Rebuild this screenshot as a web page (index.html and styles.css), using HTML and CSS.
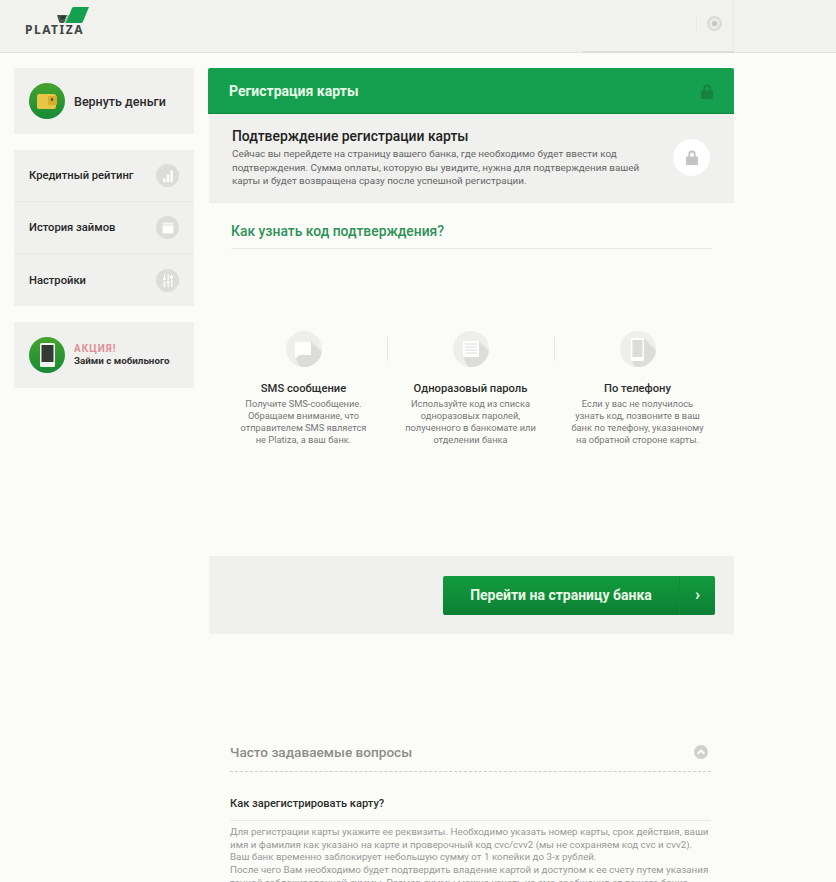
FILE: index.html
```html
<!DOCTYPE html>
<html lang="ru">
<head>
<meta charset="utf-8">
<title>Platiza</title>
<link rel="stylesheet" href="styles.css">
</head>
<body>
<header class="topbar">
  <div class="logo">
    <svg class="logo-mark" width="32" height="17" viewBox="0 0 32 17"><path d="M0 8h10l-2.500 7q-.5 1-1.500 1H4q-1.500 0-2-1.500z" fill="#44584a"/><path d="M3.500 9h5l-1 3h-3z" fill="#2b3a30"/><path d="M10.800 8h3L9.500 16h-2z" fill="#7cc596"/><path d="M15 1q.5-1 2-1h15l-6 14.500q-.6 1.500-2 1.500H9z" fill="#14a04e"/></svg>
    <span class="logo-text">PLATIZA</span>
  </div>
  <div class="top-user">
    <span class="top-sep"></span>
    <span class="top-gear"><i></i></span>
  </div>
  <div class="top-rule"></div>
</header>
<div class="page">
  <aside class="side">
    <a class="side-card refund">
      <span class="round green">
        <svg width="20" height="15" viewBox="0 0 20 15"><rect width="19" height="15" rx="2" fill="#e8c544"/><rect x="11" y="2" width="9" height="9" rx="1" fill="#d8ad2c"/><circle cx="15" cy="5.500" r="1.200" fill="#3b3a20"/></svg>
      </span>
      <span class="refund-text">Вернуть деньги</span>
    </a>
    <nav class="side-menu">
      <a class="menu-item"><span>Кредитный рейтинг</span>
        <span class="menu-icon"><svg width="14" height="16" viewBox="0 0 14 16"><path d="M1 11h3v5H1zM5.500 6h3v10h-3zM10 1h3v15h-3z" fill="#fff"/></svg></span></a>
      <a class="menu-item"><span>История займов</span>
        <span class="menu-icon"><svg width="14" height="14" viewBox="0 0 14 14"><rect width="14" height="3" fill="#fff" opacity=".7"/><rect y="4" width="14" height="10" fill="#fff"/></svg></span></a>
      <a class="menu-item"><span>Настройки</span>
        <span class="menu-icon"><svg width="14" height="17" viewBox="0 0 14 17"><path d="M2 0h1v5h1v3H1V5h1zM1.500 10h2v7h-2zM6.500 0h1.500v8h-1.500zM5.500 9h3.500v3H5.500zM6.500 13h1.500v4h-1.500zM11 0h1v3h1.500v3h-4V3H11zM11 7.500h1.500V17H11z" fill="#fff"/></svg></span></a>
    </nav>
    <a class="side-card promo">
      <span class="round green">
        <svg width="15" height="24" viewBox="0 0 15 24"><rect width="15" height="24" rx="1.500" fill="#f4f5ee"/><rect x="1.500" y="2" width="12" height="17" fill="#333a36"/></svg>
      </span>
      <span class="promo-text"><b>АКЦИЯ!</b><em>Займи с мобильного</em></span>
    </a>
  </aside>
  <main class="main">
    <div class="title-bar">
      <h1>Регистрация карты</h1>
      <svg width="12" height="15" viewBox="0 0 13 16"><path d="M2.500 7V4.500a4 4 0 0 1 8 0V7H13v9H0V7zM4.500 7h4V4.500a2 2 0 0 0-4 0z" fill="#178240"/></svg>
    </div>
    <section class="confirm">
      <div class="confirm-text">
        <h2>Подтверждение регистрации карты</h2>
        <p>Сейчас вы перейдете на страницу вашего банка, где необходимо будет ввести код подтверждения. Сумма оплаты, которую вы увидите, нужна для подтверждения вашей карты и будет возвращена сразу после успешной регистрации.</p>
      </div>
      <span class="lock-round"><svg width="12" height="15" viewBox="0 0 13 16"><path d="M2.500 7V4.500a4 4 0 0 1 8 0V7H13v9H0V7zM4.500 7h4V4.500a2 2 0 0 0-4 0z" fill="#c4c5c2"/></svg></span>
    </section>
    <section class="how">
      <h3>Как узнать код подтверждения?</h3>
      <div class="ways">
        <article class="way">
          <span class="way-icon"><svg width="36" height="36" viewBox="0 0 36 36"><path d="M25 10L45 30V45H20L9 27z" fill="#dcdcd9"/><path d="M9 11h16v13H13l-2.500 3H9z" fill="#fff"/></svg></span>
          <h4>SMS сообщение</h4>
          <p>Получите SMS-сообщение. Обращаем внимание, что отправителем SMS является не Platiza, а ваш банк.</p>
        </article>
        <article class="way">
          <span class="way-icon"><svg width="36" height="36" viewBox="0 0 36 36"><path d="M26 10L46 30V46H20L10 26z" fill="#dcdcd9"/><rect x="10" y="10" width="16" height="16" fill="#fff"/><path d="M12 13h12M12 16h12M12 19h12M12 22h12" stroke="#dcdcd9"/></svg></span>
          <h4>Одноразовый пароль</h4>
          <p>Используйте код из списка одноразовых паролей, полученного в банкомате или отделении банка</p>
        </article>
        <article class="way">
          <span class="way-icon"><svg width="36" height="36" viewBox="0 0 36 36"><path d="M24 7L46 30V46H20L12 30z" fill="#dcdcd9"/><rect x="11" y="7" width="13" height="23" rx="1" fill="#fff"/><rect x="12.500" y="9" width="10" height="17" fill="#dcdcd9"/></svg></span>
          <h4>По телефону</h4>
          <p>Если у вас не получилось узнать код, позвоните в ваш банк по телефону, указанному на обратной стороне карты.</p>
        </article>
      </div>
    </section>
    <div class="action">
      <a class="bank-btn"><span class="bank-label">Перейти на страницу банка</span><span class="bank-arrow">›</span></a>
    </div>
    <section class="faq">
      <div class="faq-head">
        <h3>Часто задаваемые вопросы</h3>
        <span class="faq-toggle"><svg width="8" height="6" viewBox="0 0 8 6"><path d="M4 0l4 4-1.200 1.500L4 2.800 1.200 5.500 0 4z" fill="#fff"/></svg></span>
      </div>
      <h4>Как зарегистрировать карту?</h4>
      <p>Для регистрации карты укажите ее реквизиты. Необходимо указать номер карты, срок действия, ваши имя и фамилия как указано на карте и проверочный код cvc/cvv2 (мы не сохраняем код cvc и cvv2).<br>Ваш банк временно заблокирует небольшую сумму от 1 копейки до 3-х рублей.<br>После чего Вам необходимо будет подтвердить владение картой и доступом к ее счету путем указания точной заблокированной суммы. Размер суммы можно узнать из смс-сообщения от вашего банка.</p>
    </section>
  </main>
</div>
</body>
</html>
```
FILE: styles.css
```css
* { box-sizing: border-box; }
html, body { margin: 0; height: 882px; overflow: hidden; }
body { background: #fbfcf8; font-family: Roboto, "Noto Sans", sans-serif; color: #222; }
h1, h2, h3, h4, p { margin: 0; }

.topbar { position: relative; height: 53px; background: #f1f1ee; border-bottom: 1px solid #e3e3df; display: flex; }
.logo { position: relative; width: 583px; padding: 7px 0 0 25px; }
.logo-mark { display: block; margin-left: 32px; }
.logo-text { display: block; font: 700 12px/11px "Noto Sans", sans-serif; letter-spacing: 1.500px; color: #3f4441; }
.top-user { width: 151px; height: 52px; display: flex; align-items: center; justify-content: flex-end; padding: 0 11px 6px 0; border-right: 1px solid #e6e6e2; }
.top-sep { width: 1px; height: 16px; background: #e8e8e4; margin-right: 10px; }
.top-gear { width: 15px; height: 15px; border-radius: 50%; background: #e9e9e6; border: 2px solid #d9d9d6; display: flex; align-items: center; justify-content: center; }
.top-gear i { width: 5px; height: 5px; border-radius: 50%; background: #c4c4c1; }
.top-rule { position: absolute; left: 583px; width: 151px; bottom: -1px; height: 2px; background: #dcdcd8; }

.page { display: flex; align-items: flex-start; padding: 15px 102px 0 14px; gap: 14px; }
.side { width: 180px; flex: none; display: flex; flex-direction: column; gap: 16px; }
.side-card { display: flex; align-items: center; height: 66px; background: #f0f0ee; padding-left: 15px; }
.round { width: 36px; height: 36px; border-radius: 50%; flex: none; display: flex; align-items: center; justify-content: center; background: linear-gradient(#46a42c, #178a37); }
.refund-text { margin-left: 9px; font-size: 12.500px; font-weight: 500; color: #2c2c2c; }
.side-menu { background: #f0f0ee; display: flex; flex-direction: column; }
.menu-item { height: 52px; display: flex; align-items: center; justify-content: space-between; padding: 0 15px; border-bottom: 1px solid #e8e8e5; font-size: 11.200px; font-weight: 500; color: #262626; }
.menu-item:last-child { border-bottom: 0; }
.menu-icon { width: 23px; height: 23px; border-radius: 50%; background: #dcdcd9; display: flex; align-items: center; justify-content: center; }
.menu-icon svg { transform: scale(.8); }
.promo-text { margin-left: 9px; padding-bottom: 2px; display: flex; flex-direction: column; }
.promo-text b { font-size: 10px; line-height: 13px; letter-spacing: 1px; color: #e08d96; font-weight: 700; }
.promo-text em { font-style: normal; font-weight: 700; font-size: 9.800px; line-height: 12px; color: #333; }

.main { width: 526px; flex: none; }
.title-bar { height: 46px; background: #14a04e; border-bottom: 1px solid #0e8a3f; border-radius: 2px 2px 0 0; display: flex; align-items: center; justify-content: space-between; padding: 1px 21px 0 21px; }
.title-bar h1 { font-size: 14px; font-weight: 700; color: #e6f8e8; }
.confirm { height: 89px; margin-left: 1px; background: #f0f0ee; border-bottom: 1px solid #ebebe8; display: flex; justify-content: space-between; padding: 14px 24px 0 23px; }
.confirm-text { width: 412px; }
.confirm h2 { font-size: 13.900px; line-height: 17px; font-weight: 500; color: #1f1f1f; }
.confirm p { margin-top: 2px; font-size: 9.900px; line-height: 13.500px; color: #666; }
.lock-round { width: 37px; height: 37px; margin-top: 11px; border-radius: 50%; background: #fff; display: flex; align-items: center; justify-content: center; }

.how { padding: 18px 22px 0 23px; height: 353px; }
.how h3 { font-size: 13.900px; line-height: 20px; font-weight: 500; color: #2f9257; padding-bottom: 7px; border-bottom: 1px solid #e9e9e6; }
.ways { display: flex; margin: 82px 0 0 -11px; width: 501px; }
.way { width: 167px; padding: 0 16px; text-align: center; position: relative; }
.way + .way::before { content: ""; position: absolute; left: 0; top: 6px; height: 24px; width: 1px; background: #e6e6e3; }
.way-icon { width: 36px; height: 36px; margin: 0 auto; border-radius: 50%; background: #eeeeeb; display: block; overflow: hidden; }
.way-icon svg { display: block; }
.way h4 { margin-top: 15px; font-size: 11.200px; line-height: 14px; font-weight: 500; color: #2c2c2c; }
.way p { margin-top: 2px; font-size: 9.300px; line-height: 12px; color: #777; }

.action { height: 78px; margin-left: 1px; background: #f0f0ee; display: flex; justify-content: flex-end; align-items: center; padding-right: 19px; }
.bank-btn { width: 272px; height: 39px; border-radius: 2px; background: linear-gradient(#129c3e, #0d7f34); display: flex; color: #e9f8e6; font-weight: 700; }
.bank-label { flex: 1; font-size: 14px; line-height: 39px; text-align: center; }
.bank-arrow { width: 36px; border-left: 1px solid #0e8c39; text-align: center; font-size: 17px; line-height: 37px; }

.faq { margin-top: 102px; padding: 0 23px 0 22px; }
.faq-head { display: flex; justify-content: space-between; align-items: center; height: 36px; padding: 0 3px 3px 0; border-bottom: 1px dashed #cfcfcc; }
.faq-head h3 { font-size: 13.600px; font-weight: 500; color: #8d8d8a; }
.faq-toggle { width: 14px; height: 14px; border-radius: 50%; background: #cfd0cd; display: flex; align-items: center; justify-content: center; }
.faq h4 { margin-top: 24px; font-size: 11.100px; line-height: 16px; font-weight: 500; color: #2c2c2c; padding-bottom: 8px; border-bottom: 1px solid #e9e9e6; }
.faq p { margin-top: 5px; font-size: 9.800px; line-height: 12.700px; color: #999; }
```
